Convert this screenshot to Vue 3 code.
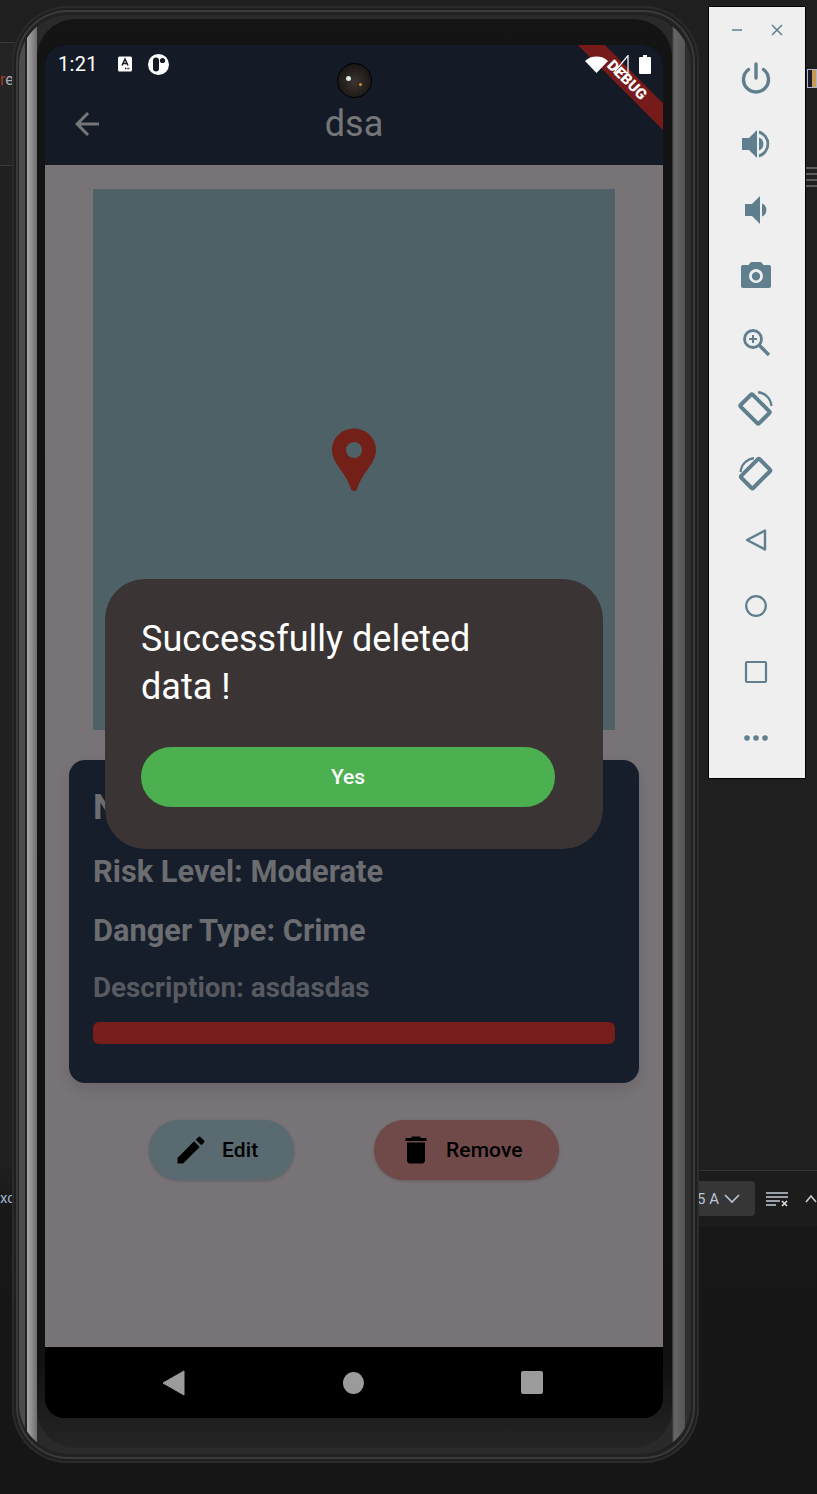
<script setup>
const tools = ['power','up','down','camera','zoom','rotl','rotr','back','home','square','more']
</script>

<template>
  <div class="desk">
    <div class="ide-top"></div>
    <div class="ide-left-tab"><span class="r">r</span>e</div>
    <div class="ide-right-swatch"></div>
    <div class="ide-right-lines"><i></i><i></i><i></i><i></i></div>
    <div class="ide-status-l">xc</div>
    <div class="ide-status-r">
      <span class="combo">5 A<svg width="16" height="10" viewBox="0 0 16 10"><path d="M1 1l7 7 7-7" fill="none" stroke="#b9c6d6" stroke-width="1.6"/></svg></span>
      <svg width="24" height="16" viewBox="0 0 24 16"><path d="M1 2h22M1 6h22M1 10h14M1 14h10" stroke="#c4ccd6" stroke-width="1.5"/><path d="M17 10l5 5M22 10l-5 5" stroke="#e0e0e0" stroke-width="1.6"/></svg>
      <svg class="up" width="14" height="10" viewBox="0 0 14 10"><path d="M2 8l5-6 5 6" fill="none" stroke="#c8c8c8" stroke-width="1.6"/></svg>
    </div>

    <div class="phone">
      <div class="screen">
        <header class="top">
          <div class="status">
            <span class="time">1:21</span>
            <svg class="ic-a" width="15" height="16" viewBox="0 0 15 16"><rect width="14" height="15" y=".5" rx="1.5" fill="#fff"/><path d="M4 9.500L7 3l3 6.500M5 7.600h4" stroke="#141b27" stroke-width="1.500" fill="none"/><path d="M7 12.500h5" stroke="#141b27" stroke-width="1.500" stroke-dasharray="1 .6"/></svg>
            <svg class="ic-p" width="21" height="21" viewBox="0 0 21 21"><circle cx="10.500" cy="10.500" r="10.500" fill="#fff"/><rect x="5" y="3.500" width="6" height="14" rx="3" fill="#141b27"/><circle cx="14.500" cy="6.500" r="2.600" fill="#141b27"/></svg>
            <span class="status-fill"></span>
            <svg width="23" height="18" viewBox="0 0 23 18"><path d="M0 6a17 17 0 0 1 23 0L11.500 18z" fill="#fff"/></svg>
            <svg class="ic-sig" width="16" height="18" viewBox="0 0 16 18"><path d="M15 .5v17H1z" fill="none" stroke="#fff" stroke-width="1.200"/></svg>
            <svg width="12" height="19" viewBox="0 0 12 19"><path d="M4 0h4v2h3a1 1 0 0 1 1 1v15a1 1 0 0 1-1 1H1a1 1 0 0 1-1-1V3a1 1 0 0 1 1-1h3z" fill="#fff"/></svg>
          </div>
          <div class="appbar">
            <svg class="arrow" width="36" height="36" viewBox="0 0 24 24"><path d="M20 11H7.830l5.590-5.590L12 4l-8 8 8 8 1.410-1.410L7.830 13H20z" fill="#757677"/></svg>
            <h1>dsa</h1>
          </div>
        </header>

        <main class="content">
          <div class="map">
            <svg class="pin" width="44" height="64" viewBox="0 0 44 64"><path fill-rule="evenodd" d="M22 .5C10 .5 0 9.800 0 22c0 7 3.500 12.500 8 19 4.500 6.500 8 11 11 20 .6 2.500 5.400 2.500 6 0 3-9 6.500-13.500 11-20 4.500-6.500 8-12 8-19C44 9.800 34 .5 22 .5zM22 14a8 8 0 1 1 0 16 8 8 0 0 1 0-16z" fill="#732018"/></svg>
          </div>
          <section class="card">
            <div class="name">Name: dsa</div>
            <div class="row">Risk Level: Moderate</div>
            <div class="row danger">Danger Type: Crime</div>
            <div class="desc">Description: asdasdas</div>
            <div class="bar"></div>
          </section>
          <div class="actions">
            <button class="btn edit">
              <svg width="36" height="36" viewBox="0 0 24 24"><path d="M3 17.250V21h3.750L17.810 9.940l-3.750-3.750L3 17.250zM20.710 7.040a1 1 0 0 0 0-1.410l-2.340-2.340a1 1 0 0 0-1.410 0l-1.830 1.830 3.750 3.750 1.830-1.830z" fill="#000"/></svg>
              <span>Edit</span>
            </button>
            <button class="btn remove">
              <svg width="36" height="36" viewBox="0 0 24 24"><path d="M6 19c0 1.100.9 2 2 2h8c1.100 0 2-.9 2-2V7H6v12zM19 4h-3.500l-1-1h-5l-1 1H5v2h14V4z" fill="#000"/></svg>
              <span>Remove</span>
            </button>
          </div>
        </main>

        <nav class="nav">
          <svg width="24" height="26" viewBox="0 0 24 26"><path d="M22 1v24L1 13z" fill="#9b9b9b" stroke="#9b9b9b" stroke-linejoin="round"/></svg>
          <span class="dot"></span>
          <span class="sq"></span>
        </nav>

        <div class="ribbon"><span>DEBUG</span></div>

        <div class="dialog">
          <p>Successfully deleted data !</p>
          <button class="yes">Yes</button>
        </div>
      </div>
      <div class="lens"><i class="g1"></i><i class="g2"></i></div>
    </div>

    <aside class="tools">
      <div class="win">
        <svg width="12" height="12" viewBox="0 0 12 12"><path d="M1 6h10" stroke="#5f7f8e" stroke-width="1.500"/></svg>
        <svg width="12" height="12" viewBox="0 0 12 12"><path d="M1 1l10 10M11 1L1 11" stroke="#5f7f8e" stroke-width="1.500"/></svg>
      </div>
      <div v-for="t in tools" :key="t" class="tool">
        <svg width="36" height="36" viewBox="0 0 36 36" fill="#5f7f8e">
          <g v-if="t === 'power'"><path d="M18 4v14" stroke="#5f7f8e" stroke-width="3.400" stroke-linecap="round" fill="none"/><path d="M10.500 9.500a12.500 12.500 0 1 0 15 0" stroke="#5f7f8e" stroke-width="3.400" fill="none" stroke-linecap="round"/></g>
          <g v-else-if="t === 'up'"><path d="M4 12h7l8-8v28l-8-8H4z"/><path d="M21 11.500a7 7 0 0 1 0 13z"/><path d="M21 4.500a14 14 0 0 1 0 27v-3.200a10.800 10.800 0 0 0 0-20.600z"/></g>
          <g v-else-if="t === 'down'"><path d="M7 12h7l8-8v28l-8-8H7z"/><path d="M24 11.500a7 7 0 0 1 0 13z"/></g>
          <g v-else-if="t === 'camera'"><path fill-rule="evenodd" d="M13 4h10l2.500 3H31a2 2 0 0 1 2 2v19a2 2 0 0 1-2 2H5a2 2 0 0 1-2-2V9a2 2 0 0 1 2-2h5.500zM18 11a7 7 0 1 0 0 14 7 7 0 0 0 0-14zm0 3a4.200 4.200 0 1 1 0 8.400 4.200 4.200 0 0 1 0-8.400z"/></g>
          <g v-else-if="t === 'zoom'" fill="none" stroke="#5f7f8e"><circle cx="15" cy="15" r="8.500" stroke-width="2.800"/><path d="M21.500 21.500L31 31" stroke-width="3.400"/><path d="M15 11v8M11 15h8" stroke-width="2"/></g>
          <g v-else-if="t === 'rotl'"><g transform="rotate(-45 17 19)"><rect x="8.500" y="6" width="17" height="26" rx="1.500" fill="none" stroke="#5f7f8e" stroke-width="4"/></g><path d="M20 1a16 16 0 0 1 14.500 15h-2.200A13.500 13.500 0 0 0 20 3.500z"/></g>
          <g v-else-if="t === 'rotr'"><g transform="rotate(45 19 19)"><rect x="10.500" y="6" width="17" height="26" rx="1.500" fill="none" stroke="#5f7f8e" stroke-width="4" transform="translate(-2 0)"/></g><path d="M16 1A16 16 0 0 0 1.500 16h2.200A13.500 13.500 0 0 1 16 3.500z"/></g>
          <g v-else-if="t === 'back'" fill="none" stroke="#5f7f8e" stroke-width="2.400" stroke-linejoin="round"><path d="M27 8.500v19L9 18z"/></g>
          <circle v-else-if="t === 'home'" cx="18" cy="18" r="9.800" fill="none" stroke="#5f7f8e" stroke-width="2.200"/>
          <rect v-else-if="t === 'square'" x="8" y="8" width="20" height="20" rx="1" fill="none" stroke="#5f7f8e" stroke-width="2.200"/>
          <g v-else><circle cx="9" cy="18" r="2.800"/><circle cx="18" cy="18" r="2.800"/><circle cx="27" cy="18" r="2.800"/></g>
        </svg>
      </div>
    </aside>
  </div>
</template>

<style>
html, body { margin: 0; background: #1c1c1c; }
</style>

<style scoped>
* { box-sizing: border-box; }
.desk {
  position: relative;
  width: 817px;
  height: 1494px;
  overflow: hidden;
  font-family: Roboto, "Liberation Sans", sans-serif;
  background: linear-gradient(#1f1f1f 0, #1f1f1f 1170px, #171717 1215px, #161616 100%);
}
.ide-top { position: absolute; left: 0; top: 42px; width: 20px; height: 124px; background: #242424; border-top: 1px solid #3a3a3a; border-bottom: 1px solid #3a3a3a; }
.ide-left-tab { position: absolute; left: 0; top: 70px; font-size: 16px; color: #a9a9a9; }
.ide-left-tab .r { color: #a53b2a; }
.ide-right-swatch { position: absolute; left: 807px; top: 69px; width: 10px; height: 19px; border: 1px solid #a9b4c9; background: linear-gradient(90deg,#1a1a2a 50%,#c99a4f 50%); }
.ide-right-lines { position: absolute; left: 806px; top: 167px; width: 11px; height: 20px; display: flex; flex-direction: column; gap: 4px; }
.ide-right-lines i { height: 2px; background: #5a5a5a; }
.ide-status-l { position: absolute; left: 0; top: 1189px; color: #9fb4c8; font-size: 15px; }
.ide-status-r { position: absolute; left: 695px; top: 1170px; width: 122px; height: 56px; display: flex; align-items: center; gap: 10px; background: #1c1c1c; border-top: 1px solid #333; overflow: hidden; }
.ide-status-r > * { flex: none; }
.combo { display: flex; align-items: center; gap: 5px; width: 60px; height: 35px; padding-left: 2px; border-radius: 4px; background: #363636; color: #b9c6d6; font-size: 15px; }
.up { margin-left: 5px; }

.phone {
  position: absolute;
  left: 12px; top: 6px;
  width: 687px; height: 1457px;
  padding: 39px 36px 45px 33px;
  border-radius: 56px;
  background: #1a1a1a;
  box-shadow: inset 0 0 0 2px #2b2b2b, inset 0 0 0 4px #1e1e1e, inset 0 0 0 6px #3a3a3a, inset 0 0 0 9px #222;
}
.phone::before {
  content: "";
  position: absolute;
  left: 7px; right: 8px; top: 9px; bottom: 9px;
  border-radius: 50px;
  background: linear-gradient(90deg,
    #4c4c4c 0, #4c4c4c 6px, #222 6px, #222 8px,
    #a8a8a8 8px, #6e6e6e 18px, #2a2a2a 18px,
    #2a2a2a calc(100% - 19px), #666 calc(100% - 17px), #555 calc(100% - 6px), #2e2e2e calc(100% - 6px));
}
.phone::after {
  content: "";
  position: absolute;
  left: 25px; right: 27px; top: 13px; bottom: 15px;
  border-radius: 38px;
  background: linear-gradient(#141414 0, #111 94%, #252525 100%);
}
.screen {
  position: relative;
  z-index: 1;
  width: 618px; height: 1373px;
  display: flex; flex-direction: column;
  border-radius: 20px;
  overflow: hidden;
  background: #000;
}
.top { height: 120px; flex: none; background: #141b27; display: flex; flex-direction: column; }
.status { position: relative; z-index: 2; height: 38px; display: flex; align-items: center; padding: 0 12px 0 13px; gap: 0; }
.time { color: #fff; font-size: 20px; letter-spacing: .3px; width: 60px; }
.ic-p { margin-left: 15px; }
.status-fill { flex: 1; }
.ic-sig { margin: 0 10px 0 5px; }
.appbar { flex: 1; position: relative; display: flex; align-items: center; justify-content: center; }
.arrow { position: absolute; left: 24px; top: 23px; }
h1 { margin: 0; font-weight: 400; font-size: 36px; color: #757677; line-height: 40px; }

.content { flex: 1; background: #787377; display: flex; flex-direction: column; align-items: center; padding-top: 24px; }
.map { width: 522px; height: 541px; flex: none; background: #4e6167; position: relative; display: flex; align-items: center; justify-content: center; }
.card {
  width: 570px; height: 323px; flex: none;
  margin-top: 30px;
  background: #161d2b;
  border-radius: 16px;
  padding: 29px 24px 0;
  box-shadow: 0 6px 14px rgba(0,0,0,.12);
}
.name { font-size: 35px; font-weight: 700; color: #6b6d70; line-height: 38px; height: 65px; }
.row { font-size: 30.800px; font-weight: 700; color: #6b6d70; line-height: 36px; height: 59px; }
.danger { height: 59px; }
.desc { font-size: 27.800px; font-weight: 700; color: #575a60; line-height: 32px; height: 50px; }
.bar { height: 22px; background: #771e1a; border-radius: 6px; }

.actions { width: 410px; margin-top: 37px; display: flex; justify-content: space-between; }
.btn { height: 60px; border: 0; border-radius: 30px; display: flex; align-items: center; font: 500 21px Roboto, sans-serif; letter-spacing: .1px; color: #000; box-shadow: 0 1px 3px rgba(0,0,0,.2); padding: 0 0 0 24px; }
.edit { width: 145px; background: #5a6a71; gap: 13px; }
.remove { width: 185px; background: #704949; gap: 12px; }

.nav { height: 71px; flex: none; background: #000; display: flex; align-items: center; padding: 0 120px 0 117px; justify-content: space-between; }
.dot { width: 21px; height: 22px; border-radius: 50%; background: #9b9b9b; }
.sq { width: 22px; height: 23px; border-radius: 2px; background: #9b9b9b; }

.ribbon { position: absolute; z-index: 1; left: 457px; top: 26px; width: 250px; height: 18.500px; background: #771a1a; transform: rotate(45deg); display: flex; align-items: center; justify-content: center; }
.ribbon span { color: #fff; font-size: 15px; font-weight: 900; letter-spacing: .2px; line-height: 1; }

.dialog {
  position: absolute; z-index: 3; left: 60px; top: 534px;
  width: 498px; height: 270px;
  background: #3a3534;
  border-radius: 40px;
  padding: 36px 48px 0 36px;
}
.dialog p { margin: 0; font-size: 36px; line-height: 48px; color: #fff; font-weight: 400; height: 132px; max-width: 400px; }
.yes { width: 414px; height: 60px; border: 0; border-radius: 30px; background: #4caf50; color: #fff; font: 500 21px Roboto, sans-serif; }

.lens { position: absolute; z-index: 2; left: 325px; top: 57px; width: 35px; height: 35px; border-radius: 50%; background: radial-gradient(circle at 50% 55%, #3c3531 0, #1a1715 70%, #050505 100%); border: 1px solid #000; }
.lens i { position: absolute; border-radius: 50%; }
.g1 { left: 8px; top: 12px; width: 5px; height: 5px; background: #dfe8df; }
.g2 { left: 21px; top: 19px; width: 3px; height: 3px; background: #d48a30; }

.tools { position: absolute; left: 708px; top: 6px; width: 98px; height: 773px; background: #efefef; border: 1px solid #000; display: flex; flex-direction: column; align-items: center; padding-right: 2px; }
.win { width: 100%; height: 38px; flex: none; display: flex; align-items: center; padding: 7px 20px 0 22px; justify-content: space-between; }
.tool { height: 66px; flex: none; display: flex; align-items: center; justify-content: center; }
</style>
